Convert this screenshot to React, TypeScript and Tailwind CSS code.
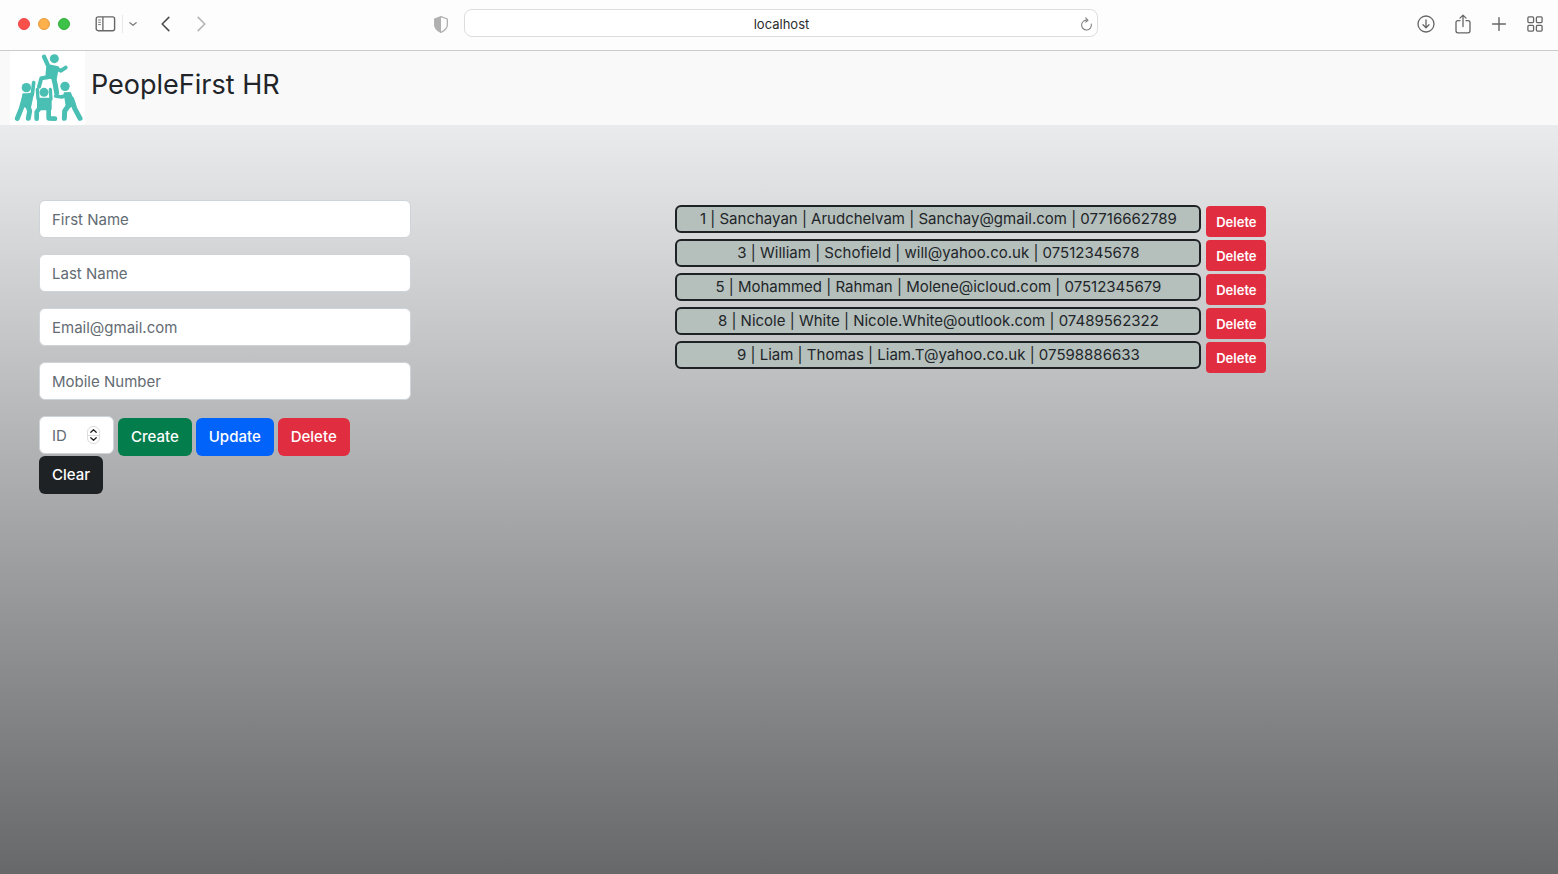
import { useState } from "react";
import type { ReactNode } from "react";

type Employee = {
  id: number;
  firstName: string;
  lastName: string;
  email: string;
  mobile: string;
};

const initialEmployees: Employee[] = [
  { id: 1, firstName: "Sanchayan", lastName: "Arudchelvam", email: "Sanchay@gmail.com", mobile: "07716662789" },
  { id: 3, firstName: "William", lastName: "Schofield", email: "will@yahoo.co.uk", mobile: "07512345678" },
  { id: 5, firstName: "Mohammed", lastName: "Rahman", email: "Molene@icloud.com", mobile: "07512345679" },
  { id: 8, firstName: "Nicole", lastName: "White", email: "Nicole.White@outlook.com", mobile: "07489562322" },
  { id: 9, firstName: "Liam", lastName: "Thomas", email: "Liam.T@yahoo.co.uk", mobile: "07598886633" },
];

const fields = [
  { name: "firstName", type: "text", placeholder: "First Name" },
  { name: "lastName", type: "text", placeholder: "Last Name" },
  { name: "email", type: "email", placeholder: "Email@gmail.com" },
  { name: "mobile", type: "tel", placeholder: "Mobile Number" },
];

function ToolButton({ label, children }: { label: string; children: ReactNode }) {
  return (
    <button type="button" aria-label={label} className="flex shrink-0 items-center justify-center text-[#666666]">
      {children}
    </button>
  );
}

function BrowserBar() {
  return (
    <div className="grid h-[51px] grid-cols-[464fr_634fr_460fr] items-center border-b border-[#cbcbcb] bg-[#fdfdfd] pb-1">
      <div className="flex items-center pt-[2px] pr-4 pl-[18px]">
        <div className="flex gap-2">
          <button type="button" aria-label="Close window" className="size-3 rounded-full border border-[#e8443f] bg-[#fb4f4c]" />
          <button type="button" aria-label="Minimise window" className="size-3 rounded-full border border-[#e69c3d] bg-[#feb04a]" />
          <button type="button" aria-label="Zoom window" className="size-3 rounded-full border border-[#2fae3a] bg-[#3cc248]" />
        </div>
        <div className="ml-[25px] flex items-center">
          <ToolButton label="Sidebar">
            <svg width="21" height="16" viewBox="0 0 21 16" fill="none" stroke="currentColor">
              <rect x="1.2" y="0.9" width="18.4" height="13.8" rx="2" strokeWidth="1.4" />
              <path d="M7.9 1v13.6" strokeWidth="1.3" />
              <path d="M3.2 4h2.6M3.2 6.3h2.6M3.2 8.6h2.6" strokeWidth="0.9" />
            </svg>
          </ToolButton>
          <span className="mx-[6px] h-[18px] w-px bg-[#e8e8e8]" />
          <ToolButton label="Tab groups">
            <svg width="8" height="6" viewBox="0 0 8 6" fill="none" stroke="#808080" strokeWidth="1.4" strokeLinecap="round" strokeLinejoin="round">
              <path d="M0.9 1.8 4 4.3 7.1 1.8" />
            </svg>
          </ToolButton>
        </div>
        <div className="ml-6 flex gap-[27px]">
          <ToolButton label="Back">
            <svg width="9" height="16" viewBox="0 0 9 16" fill="none" stroke="#4c4c4c" strokeWidth="1.6" strokeLinecap="round" strokeLinejoin="round">
              <path d="M7.8 1.4 1.2 8l6.6 6.6" />
            </svg>
          </ToolButton>
          <ToolButton label="Forward">
            <svg width="9" height="16" viewBox="0 0 9 16" fill="none" stroke="#b4b4b4" strokeWidth="1.6" strokeLinecap="round" strokeLinejoin="round">
              <path d="M1.2 1.4 7.8 8l-6.6 6.6" />
            </svg>
          </ToolButton>
        </div>
        <div className="ml-auto flex">
          <ToolButton label="Privacy report">
            <svg width="14" height="17" viewBox="0 0 14 17">
              <path d="M7 0.7 13.3 3v6.3c0 3-2.2 5-6.3 7.1C2.9 14.3 0.7 12.3 0.7 9.3V3Z" fill="#fdfdfd" stroke="#b0b0b0" strokeWidth="1.3" strokeLinejoin="round" />
              <path d="M7 0.7 0.7 3v6.3c0 3 2.2 5 6.3 7.1Z" fill="#b0b0b0" />
            </svg>
          </ToolButton>
        </div>
      </div>
      <div className="flex h-7 items-center rounded-lg border border-[#dddddd] bg-white pt-[2px] pr-1 pl-[18px]">
        <input
          aria-label="Address"
          defaultValue="localhost"
          className="w-full min-w-0 bg-transparent text-center text-[13px] leading-5 text-[#2b2b2b] outline-none"
        />
        <ToolButton label="Reload">
          <svg width="13" height="14" viewBox="0 0 13 14" fill="none" stroke="#808080" strokeWidth="1.1" strokeLinecap="round" strokeLinejoin="round">
            <path d="M11.3 7.1A4.9 4.9 0 1 1 7.6 3.300" />
            <path d="M5.700 0.900 8 3.300 5.700 5.200" />
          </svg>
        </ToolButton>
      </div>
      <div className="flex items-center justify-end gap-5 pt-[2px] pr-[15px]">
        <ToolButton label="Downloads">
          <svg width="18" height="18" viewBox="0 0 18 18" fill="none" stroke="currentColor" strokeWidth="1.3" strokeLinecap="round" strokeLinejoin="round">
            <circle cx="9" cy="9" r="8" />
            <path d="M9 4.8v7.8M6 9.8l3 3 3-3" />
          </svg>
        </ToolButton>
        <ToolButton label="Share">
          <svg width="16" height="20" viewBox="0 0 16 20" fill="none" stroke="currentColor" strokeWidth="1.3" strokeLinecap="round" strokeLinejoin="round">
            <path d="M5 6.6H3a2 2 0 0 0-2 2v8.2a2 2 0 0 0 2 2h10a2 2 0 0 0 2-2V8.600a2 2 0 0 0-2-2h-2" />
            <path d="M8 12.5V1.3M5 4.1l3-3 3 3" />
          </svg>
        </ToolButton>
        <ToolButton label="New tab">
          <svg width="16" height="16" viewBox="0 0 16 16" fill="none" stroke="currentColor" strokeWidth="1.4" strokeLinecap="round">
            <path d="M8 1.600v12.800M1.600 8h12.800" />
          </svg>
        </ToolButton>
        <ToolButton label="Tab overview">
          <svg width="16" height="16" viewBox="0 0 16 16" fill="none" stroke="currentColor" strokeWidth="1.3">
            <rect x="0.9" y="0.9" width="5.7" height="5.7" rx="1" />
            <rect x="9.4" y="0.9" width="5.7" height="5.7" rx="1" />
            <rect x="0.9" y="9.4" width="5.7" height="5.7" rx="1" />
            <rect x="9.4" y="9.4" width="5.7" height="5.7" rx="1" />
          </svg>
        </ToolButton>
      </div>
    </div>
  );
}

function Logo() {
  return (
    <svg
      viewBox="0 0 225 222"
      className="h-[74px] w-[75px] bg-white"
      role="img"
      aria-label="PeopleFirst HR logo"
      fill="none"
      stroke="#4abfb3"
      strokeLinecap="round"
      strokeLinejoin="round"
    >
      <g fill="#4abfb3" stroke="none">
        <circle cx="133" cy="23" r="13.5" />
        <circle cx="49" cy="110" r="14" />
        <circle cx="165" cy="106" r="14" />
        <circle cx="102" cy="124" r="13.5" />
      </g>
      <g fill="#4abfb3" strokeWidth="6">
        <path d="M112 42 144 49 137 84 109 78Z" />
        <path d="M40 130 68 132 60 170 36 164Z" />
        <path d="M164 127 180 126 194 160 171 171Z" />
        <path d="M84 143H122V175H84Z" />
      </g>
      <path d="M102 17 113 41" strokeWidth="13" />
      <path d="M141 53 153 59 167 50" strokeWidth="12" />
      <path d="M114 79 94 82 87 107" strokeWidth="12" />
      <path d="M131 80 136 102 140 126" strokeWidth="15" />
      <path d="M71 95 67 130 47 134" strokeWidth="11" />
      <path d="M44 136 34 172 22 202" strokeWidth="15" />
      <path d="M53 164 59 180 55 202" strokeWidth="15" />
      <path d="M137 135 155 138 170 132" strokeWidth="11" />
      <path d="M185 144 194 172 210 202" strokeWidth="15" />
      <path d="M176 163 164 180 163 202" strokeWidth="15" />
      <path d="M82 115 84 144" strokeWidth="10" />
      <path d="M121 115 123 144" strokeWidth="10" />
      <path d="M88 172 80 183 80 203" strokeWidth="14" />
      <path d="M116 170 116 202 135 203" strokeWidth="14" />
    </svg>
  );
}

function IdField() {
  const [id, setId] = useState("");
  const step = (delta: number) => setId(String(Math.max(1, Number(id) + delta)));
  return (
    <div className="relative h-10 w-[75px]">
      <input
        type="number"
        aria-label="ID"
        placeholder="ID"
        value={id}
        onChange={(e) => setId(e.target.value)}
        className="h-[38px] w-full [appearance:textfield] rounded-md border border-[#ced4da] bg-white pr-7 pl-3 text-[15px] text-[#212529] placeholder:text-[#636b73] [&::-webkit-inner-spin-button]:appearance-none"
      />
      <div className="absolute top-[10px] right-[14px] flex h-[18px] w-[13px] flex-col divide-y divide-[#dddddd] rounded-md border border-[#dddddd] bg-white">
        <button type="button" aria-label="Increase ID" onClick={() => step(1)} className="flex flex-1 items-center justify-center">
          <svg width="7" height="4" viewBox="0 0 7 4" fill="none" stroke="#222222" strokeWidth="1.3" strokeLinecap="round" strokeLinejoin="round">
            <path d="M0.8 3.3 3.5 0.8 6.2 3.3" />
          </svg>
        </button>
        <button type="button" aria-label="Decrease ID" onClick={() => step(-1)} className="flex flex-1 items-center justify-center">
          <svg width="7" height="4" viewBox="0 0 7 4" fill="none" stroke="#222222" strokeWidth="1.3" strokeLinecap="round" strokeLinejoin="round">
            <path d="M0.8 0.7 3.5 3.2 6.2 0.7" />
          </svg>
        </button>
      </div>
    </div>
  );
}

const actionButton = "h-[38px] rounded-md px-[13px] text-[15px] leading-6 font-medium text-white";

export default function App() {
  const [employees, setEmployees] = useState(initialEmployees);
  return (
    <div className="flex min-h-screen flex-col font-['Inter','Liberation_Sans',sans-serif] text-[#212529]">
      <BrowserBar />
      <header className="flex gap-[6px] bg-[#f9f9f9] pl-[10px]">
        <Logo />
        <h1 className="pt-4 text-[27px] leading-9">PeopleFirst HR</h1>
      </header>
      <main className="grid flex-1 grid-cols-[43%_1fr] items-start bg-linear-to-b/srgb from-[#eaebec] to-[#67686a] px-[39px] pt-[75px]">
        <form className="flex max-w-[372px] flex-col gap-4" onSubmit={(e) => e.preventDefault()}>
          {fields.map((field) => (
            <input
              key={field.name}
              name={field.name}
              type={field.type}
              aria-label={field.placeholder}
              placeholder={field.placeholder}
              className="h-[38px] w-full rounded-md border border-[#ced4da] bg-white px-3 text-[15px] text-[#212529] placeholder:text-[#636b73]"
            />
          ))}
          <div className="flex flex-wrap items-end gap-x-1">
            <IdField />
            <button type="submit" className={`${actionButton} bg-[#047d4c]`}>Create</button>
            <button type="button" className={`${actionButton} bg-[#0263fb]`}>Update</button>
            <button type="button" className={`${actionButton} bg-[#e12d40]`}>Delete</button>
            <button type="reset" className={`${actionButton} bg-[#1e2225]`}>Clear</button>
          </div>
        </form>
        <ul className="flex flex-col gap-[2px] pt-[5px]">
          {employees.map((e) => (
            <li key={e.id} className="flex items-start gap-[5px]">
              <p className="w-full max-w-[526px] rounded-md border-2 border-[#1e2225] bg-[#b5bfbb] text-center text-[15px] leading-6">
                {`${e.id} | ${e.firstName} | ${e.lastName} | ${e.email} | ${e.mobile}`}
              </p>
              <button
                type="button"
                aria-label={`Delete ${e.firstName} ${e.lastName}`}
                onClick={() => setEmployees(employees.filter((other) => other.id !== e.id))}
                className="mt-px h-[31px] w-[60px] shrink-0 rounded bg-[#e12d40] text-[13px] leading-5 font-semibold text-white"
              >
                Delete
              </button>
            </li>
          ))}
        </ul>
      </main>
    </div>
  );
}
